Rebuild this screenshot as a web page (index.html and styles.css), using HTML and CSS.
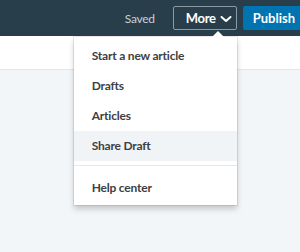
FILE: index.html
```html
<!DOCTYPE html>
<html>
<head>
    <title>Article editor</title>
    <link rel="stylesheet" href="styles.css">
</head>
<body>
    <div class="topbar">
        <div class="actions">
            <span class="saved">Saved</span>
            <div class="more-wrap">
                <button class="more-button">More
                    <svg class="chevron" width="12" height="8" viewBox="0 0 12 8"><path d="M1.5 2 L6 6 L10.5 2" fill="none" stroke="#fff" stroke-width="2" stroke-linecap="round" stroke-linejoin="round"/></svg>
                </button>
                <div class="menu">
                    <ul class="menu-list">
                        <li class="menu-item">Start a new article</li>
                        <li class="menu-item">Drafts</li>
                        <li class="menu-item">Articles</li>
                        <li class="menu-item active">Share Draft</li>
                    </ul>
                    <ul class="menu-list bottom">
                        <li class="menu-item">Help center</li>
                    </ul>
                </div>
            </div>
            <button class="publish-button">Publish</button>
        </div>
    </div>
    <div class="subbar"></div>
</body>
</html>
```

FILE: styles.css
```css
body, html {
    margin: 0;
    height: 100%;
    background-color: #f3f6f8;
    font-family: Lato, "Liberation Sans", sans-serif;
    overflow: hidden;
}

.topbar {
    height: 36px;
    background-color: #283e4a;
    display: flex;
    justify-content: flex-end;
    align-items: center;
}

.actions {
    display: flex;
    align-items: center;
    margin-right: -7px;
}

.saved {
    color: #c7d1d8;
    font-size: 12px;
    letter-spacing: -0.3px;
    margin-right: 18px;
}

.more-wrap {
    position: relative;
}

.more-button {
    display: flex;
    align-items: center;
    height: 24px;
    width: 64px;
    padding: 0 0 0 12px;
    border: 1px solid #8b9ba5;
    border-radius: 2px;
    background: transparent;
    color: #fff;
    font-family: inherit;
    font-size: 13px;
    font-weight: bold;
    letter-spacing: -0.3px;
    cursor: pointer;
}

.chevron {
    margin-left: 4px;
    margin-top: 1px;
}

.publish-button {
    height: 24px;
    margin-left: 6px;
    padding: 0 12px 0 10px;
    border: none;
    border-radius: 2px;
    background-color: #0073b1;
    color: #fff;
    font-family: inherit;
    font-size: 13px;
    font-weight: bold;
}

.menu {
    position: absolute;
    top: 31px;
    right: 0;
    width: 163px;
    background-color: #fff;
    box-shadow: 0 0 0 1px rgba(0,0,0,0.08), 0 4px 6px rgba(0,0,0,0.2);
    z-index: 2;
}

.menu::before {
    content: "";
    position: absolute;
    top: -6px;
    right: 13px;
    border-left: 6px solid transparent;
    border-right: 6px solid transparent;
    border-bottom: 6px solid #fff;
}

.menu-list {
    list-style: none;
    margin: 0;
    padding: 4px 0;
}

.menu-list.bottom {
    border-top: 1px solid #e6e9ec;
    padding: 7px 0 2px;
}

.menu-item {
    height: 30px;
    line-height: 30px;
    padding: 0 18px;
    color: #3d4043;
    font-size: 12px;
    font-weight: bold;
    letter-spacing: -0.2px;
}

.menu-item.active {
    background-color: #f1f4f7;
}

.subbar {
    height: 33px;
    background-color: #fff;
    border-bottom: 1px solid #e3e7ea;
}
```
